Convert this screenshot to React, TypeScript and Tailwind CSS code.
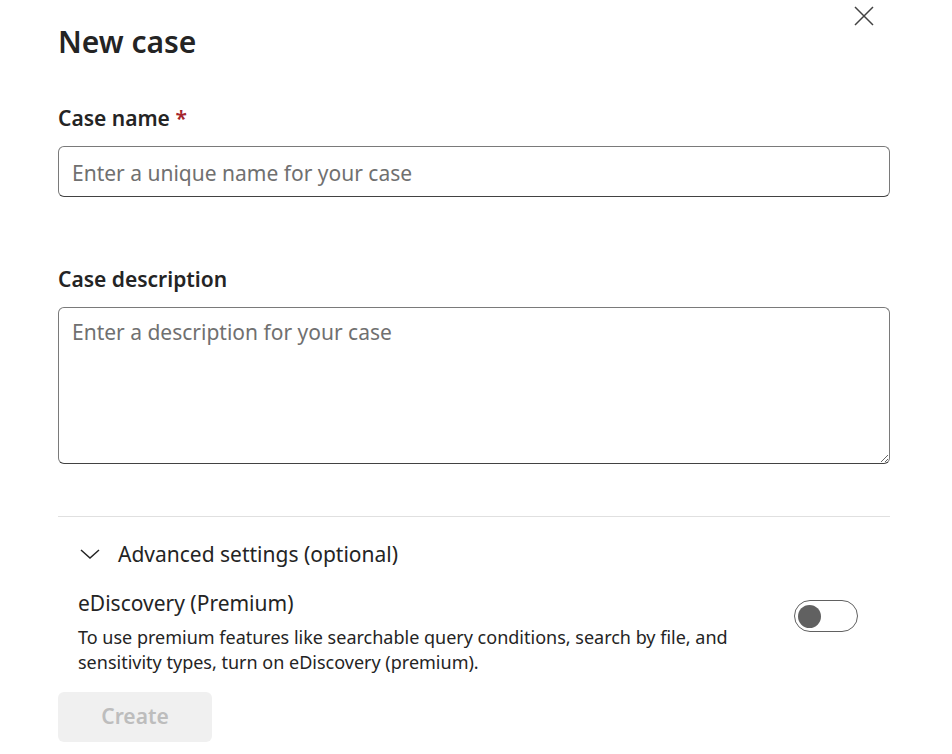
import { useState } from 'react';

const font = "font-['Segoe_UI','Noto_Sans',sans-serif]";

export default function App() {
  const [premium, setPremium] = useState(false);

  return (
    <div className={`${font} relative min-h-[754px] w-[952px] bg-white text-[#242424]`}>
      <button
        type="button"
        aria-label="Close"
        className="absolute right-[76px] top-[4px] flex size-6 items-center justify-center"
      >
        <svg viewBox="0 0 20 20" className="size-5" fill="none" stroke="#424242" strokeWidth="1.5">
          <path d="M1 1l18 18M19 1L1 19" />
        </svg>
      </button>

      <div className="flex flex-col px-[58px] pr-[62px] pt-[22px]">
        <h1 className="text-[30px] font-semibold leading-[40px]">New case</h1>

        <label className="mt-[42px] text-[21px] font-semibold leading-[28px]">
          Case name <span className="text-[#a4262c]">*</span>
        </label>
        <input
          placeholder="Enter a unique name for your case"
          className="mt-[14px] h-[51px] rounded-[6px] border border-[#7a7a7a] border-b-[#424242] px-[13px] pt-[2px] text-[21px] outline-none placeholder:text-[#707070]"
        />

        <label className="mt-[68px] text-[21px] font-semibold leading-[28px]">Case description</label>
        <textarea
          placeholder="Enter a description for your case"
          className="mt-[14px] h-[157px] rounded-[6px] border border-[#7a7a7a] border-b-[#424242] px-[13px] py-[10px] text-[21px] leading-[28px] outline-none placeholder:text-[#707070]"
        />

        <div className="mt-[52px] h-px bg-[#e0e0e0]" />

        <button type="button" className="mt-[23px] flex items-center gap-[18px] pl-[22px] text-left">
          <svg viewBox="0 0 20 10" className="h-[10px] w-[20px]" fill="none" stroke="#242424" strokeWidth="1.5">
            <path d="M1 1l9 8 9-8" />
          </svg>
          <span className="text-[21px] leading-[28px]">Advanced settings (optional)</span>
        </button>

        <div className="mt-[21px] flex items-start justify-between pl-[20px]">
          <div className="flex flex-col">
            <span className="text-[21px] leading-[28px]">eDiscovery (Premium)</span>
            <p className="mt-[8px] max-w-[660px] text-[18px] leading-[25px]">
              To use premium features like searchable query conditions, search by file, and sensitivity types, turn on
              eDiscovery (premium).
            </p>
          </div>
          <button
            type="button"
            role="switch"
            aria-checked={premium}
            onClick={() => setPremium(!premium)}
            className="mr-[32px] mt-[11px] flex h-[32px] w-[64px] shrink-0 items-center rounded-full border-[1.5px] border-[#616161] px-[3px]"
          >
            <span className="size-[23px] rounded-full bg-[#616161]" />
          </button>
        </div>

        <button
          type="button"
          disabled
          className="mt-[17px] h-[50px] w-[154px] rounded-[6px] bg-[#f0f0f0] text-[21px] font-semibold text-[#bdbdbd]"
        >
          Create
        </button>
      </div>
    </div>
  );
}
